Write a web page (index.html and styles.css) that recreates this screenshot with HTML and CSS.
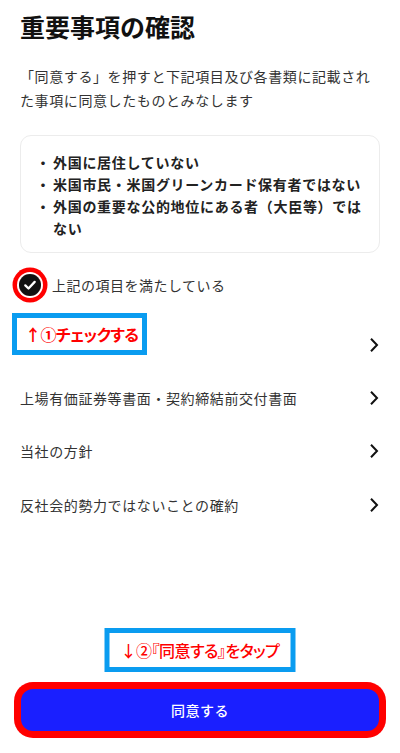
FILE: index.html
```html
<!DOCTYPE html>
<html lang="ja">
<head>
  <meta charset="UTF-8">
  <meta name="viewport" content="width=device-width, initial-scale=1.0">
  <title>重要事項の確認</title>
  <link rel="stylesheet" href="styles.css">
</head>
<body>
  <div class="page">
    <h1 class="title">重要事項の確認</h1>
    <p class="lead">「同意する」を押すと下記項目及び各書類に記載された事項に同意したものとみなします</p>

    <!-- 確認項目 -->
    <div class="terms-box">
      <ul class="terms">
        <li><span class="dot">・</span><span>外国に居住していない</span></li>
        <li><span class="dot">・</span><span>米国市民・米国グリーンカード保有者ではない</span></li>
        <li><span class="dot">・</span><span>外国の重要な公的地位にある者（大臣等）ではない</span></li>
      </ul>
    </div>

    <label class="check-row">
      <span class="check-icon">
        <svg width="22" height="22" viewBox="0 0 22 22">
          <circle cx="11" cy="11" r="11" fill="#111"/>
          <path d="M6.3 11.4l3.2 3.1 6.2-6.6" fill="none" stroke="#fff" stroke-width="2.3" stroke-linecap="round" stroke-linejoin="round"/>
        </svg>
      </span>
      <span>上記の項目を満たしている</span>
    </label>

    <!-- 書類リスト -->
    <div class="doc-list">
      <!-- 1行目のラベルは注記で隠れている -->
      <a href="#" class="doc-row"><span></span><svg class="chev" width="10" height="16" viewBox="0 0 10 16"><path d="M2 1.8l6 6.2-6 6.2" fill="none" stroke="#111" stroke-width="2"/></svg></a>
      <a href="#" class="doc-row"><span>上場有価証券等書面・契約締結前交付書面</span><svg class="chev" width="10" height="16" viewBox="0 0 10 16"><path d="M2 1.8l6 6.2-6 6.2" fill="none" stroke="#111" stroke-width="2"/></svg></a>
      <a href="#" class="doc-row"><span>当社の方針</span><svg class="chev" width="10" height="16" viewBox="0 0 10 16"><path d="M2 1.8l6 6.2-6 6.2" fill="none" stroke="#111" stroke-width="2"/></svg></a>
      <a href="#" class="doc-row"><span>反社会的勢力ではないことの確約</span><svg class="chev" width="10" height="16" viewBox="0 0 10 16"><path d="M2 1.8l6 6.2-6 6.2" fill="none" stroke="#111" stroke-width="2"/></svg></a>
      <div class="note note-check">↑①チェックする</div>
    </div>

    <div class="footer">
      <div class="note note-tap">↓②『同意する』をタップ</div>
      <button class="agree-btn">同意する</button>
    </div>
  </div>
</body>
</html>
```

FILE: styles.css
```css
* {
  box-sizing: border-box;
}
body {
  margin: 0;
  font-family: "Noto Sans CJK JP", "Noto Sans", sans-serif;
  background-color: #fff;
  color: #333;
}
.page {
  display: flex;
  flex-direction: column;
  height: 100vh;
  padding: 8px 20px 0;
}
.title {
  margin: 0;
  font-size: 25px;
  line-height: 36px;
  font-weight: bold;
  color: #111;
}
.lead {
  margin: 20px 0 0;
  font-size: 14px;
  line-height: 24px;
  letter-spacing: 0.6px;
  color: #333;
}
.terms-box {
  margin-top: 23px;
  border: 1px solid #ececec;
  border-radius: 11px;
  padding: 15px 12px 13px 15px;
}
.terms {
  list-style: none;
  margin: 0;
  padding: 0;
}
.terms li {
  display: flex;
  font-size: 14px;
  line-height: 22px;
  letter-spacing: 0.7px;
  font-weight: bold;
  color: #222;
}
.dot {
  flex: none;
  width: 17px;
}
.check-row {
  display: flex;
  align-items: center;
  gap: 11px;
  height: 32px;
  margin-top: 16px;
  font-size: 14px;
  letter-spacing: 0.5px;
  color: #333;
}
.check-icon {
  display: flex;
  width: 22px;
  height: 22px;
  margin-left: -1px;
  border-radius: 50%;
  box-shadow: 0 0 0 2px #fff, 0 0 0 6.5px #f00;
}
.doc-list {
  position: relative;
  margin-top: 17px;
}
.doc-row {
  display: flex;
  align-items: center;
  justify-content: space-between;
  height: 53.3px;
  font-size: 14px;
  letter-spacing: 0.6px;
  color: #333;
  text-decoration: none;
}
.chev {
  margin-right: 1px;
}
.note {
  position: absolute;
  background-color: #fff;
  border: 5px solid #0a9cf0;
  color: #f00;
  white-space: nowrap;
  font-feature-settings: "palt";
}
.note-check {
  top: -5px;
  left: -8px;
  width: 135px;
  height: 42px;
  padding: 0 8px;
  font-size: 16px;
  line-height: 32px;
  font-weight: bold;
  letter-spacing: -0.6px;
}
.footer {
  position: relative;
  margin-top: auto;
  padding: 0 1px 22px;
}
.note-tap {
  bottom: 100%;
  left: 50%;
  transform: translateX(-50%);
  margin-bottom: 17px;
  height: 44px;
  width: 191px;
  text-align: center;
  font-size: 16px;
  line-height: 34px;
  font-weight: 500;
  letter-spacing: -0.5px;
}
.agree-btn {
  display: block;
  width: 100%;
  height: 42px;
  border: none;
  border-radius: 12px;
  background-color: #1a1fff;
  color: #fff;
  font-family: inherit;
  font-size: 14px;
  font-weight: 500;
  letter-spacing: 0.5px;
  box-shadow: 0 0 0 7px #f00;
}
```
